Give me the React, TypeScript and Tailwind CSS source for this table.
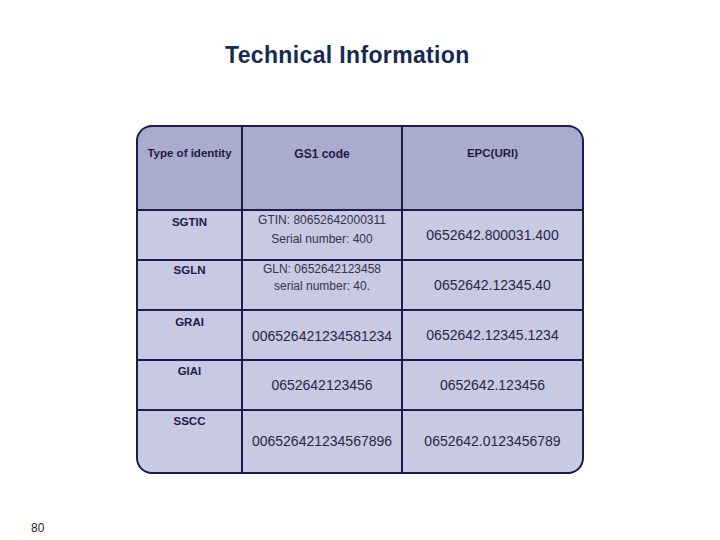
import React from "react";

const font = { fontFamily: '"Liberation Sans", Arial, sans-serif' };

export default function App() {
  return (
    <div className="w-[720px] h-[540px] bg-white relative overflow-hidden" style={font}>
      <div className="pt-[42px] pl-[225px] h-[125px]">
        <div className="text-[23px] leading-[26px] font-bold tracking-[0.35px] text-[#172a52]">
          Technical Information
        </div>
      </div>
      <div className="ml-[136px] w-[448px] h-[349px] rounded-[16px] border-2 border-[#1c1b4b] bg-[#1c1b4b] overflow-hidden">
        <div className="grid grid-cols-[103px_158px_179px] grid-rows-[82px_48px_48px_48px_48px_61px] gap-[2px] h-full text-[#20203f]">
          {/* header */}
          <div className="bg-[#a9abcf] pt-[19px] text-center text-[11.5px] leading-[14px] font-bold text-[#1b1b45]">Type of identity</div>
          <div className="bg-[#a9abcf] pt-[20px] text-center text-[12px] leading-[14px] font-bold text-[#1b1b45]">GS1 code</div>
          <div className="bg-[#a9abcf] pt-[19px] text-center text-[11.5px] leading-[14px] font-bold text-[#1b1b45]">EPC(URI)</div>

          {/* SGTIN */}
          <div className="bg-[#c8c9e2] pt-[4px] text-center text-[11.5px] leading-[14px] font-bold text-[#1b1b45]">SGTIN</div>
          <div className="bg-[#c8c9e2] text-center text-[12px] leading-[19px] text-[#33334d]">
            <div>GTIN: 80652642000311</div>
            <div>Serial number: 400</div>
          </div>
          <div className="bg-[#c8c9e2] flex items-center justify-center text-[14px] text-[#272745]">0652642.800031.400</div>

          {/* SGLN */}
          <div className="bg-[#c8c9e2] pt-[2px] text-center text-[11.5px] leading-[14px] font-bold text-[#1b1b45]">SGLN</div>
          <div className="bg-[#c8c9e2] text-center text-[12px] leading-[17px] text-[#33334d]">
            <div>GLN: 0652642123458</div>
            <div>serial number: 40.</div>
          </div>
          <div className="bg-[#c8c9e2] flex items-center justify-center text-[14px] text-[#272745]">0652642.12345.40</div>

          {/* GRAI */}
          <div className="bg-[#c8c9e2] pt-[4px] text-center text-[11.5px] leading-[14px] font-bold text-[#1b1b45]">GRAI</div>
          <div className="bg-[#c8c9e2] flex items-center justify-center text-[14px] pt-[2px] text-[#272745]">006526421234581234</div>
          <div className="bg-[#c8c9e2] flex items-center justify-center text-[14px] text-[#272745]">0652642.12345.1234</div>

          {/* GIAI */}
          <div className="bg-[#c8c9e2] pt-[3px] text-center text-[11.5px] leading-[14px] font-bold text-[#1b1b45]">GIAI</div>
          <div className="bg-[#c8c9e2] flex items-center justify-center text-[14px] text-[#272745]">0652642123456</div>
          <div className="bg-[#c8c9e2] flex items-center justify-center text-[14px] text-[#272745]">0652642.123456</div>

          {/* SSCC */}
          <div className="bg-[#c8c9e2] pt-[3px] text-center text-[11.5px] leading-[14px] font-bold text-[#1b1b45]">SSCC</div>
          <div className="bg-[#c8c9e2] flex items-center justify-center text-[14px] text-[#272745]">006526421234567896</div>
          <div className="bg-[#c8c9e2] flex items-center justify-center text-[14px] text-[#272745]">0652642.0123456789</div>
        </div>
      </div>
      <div className="pl-[31px] pt-[47px] text-[12px] leading-[14px] text-[#222]">80</div>
    </div>
  );
}
